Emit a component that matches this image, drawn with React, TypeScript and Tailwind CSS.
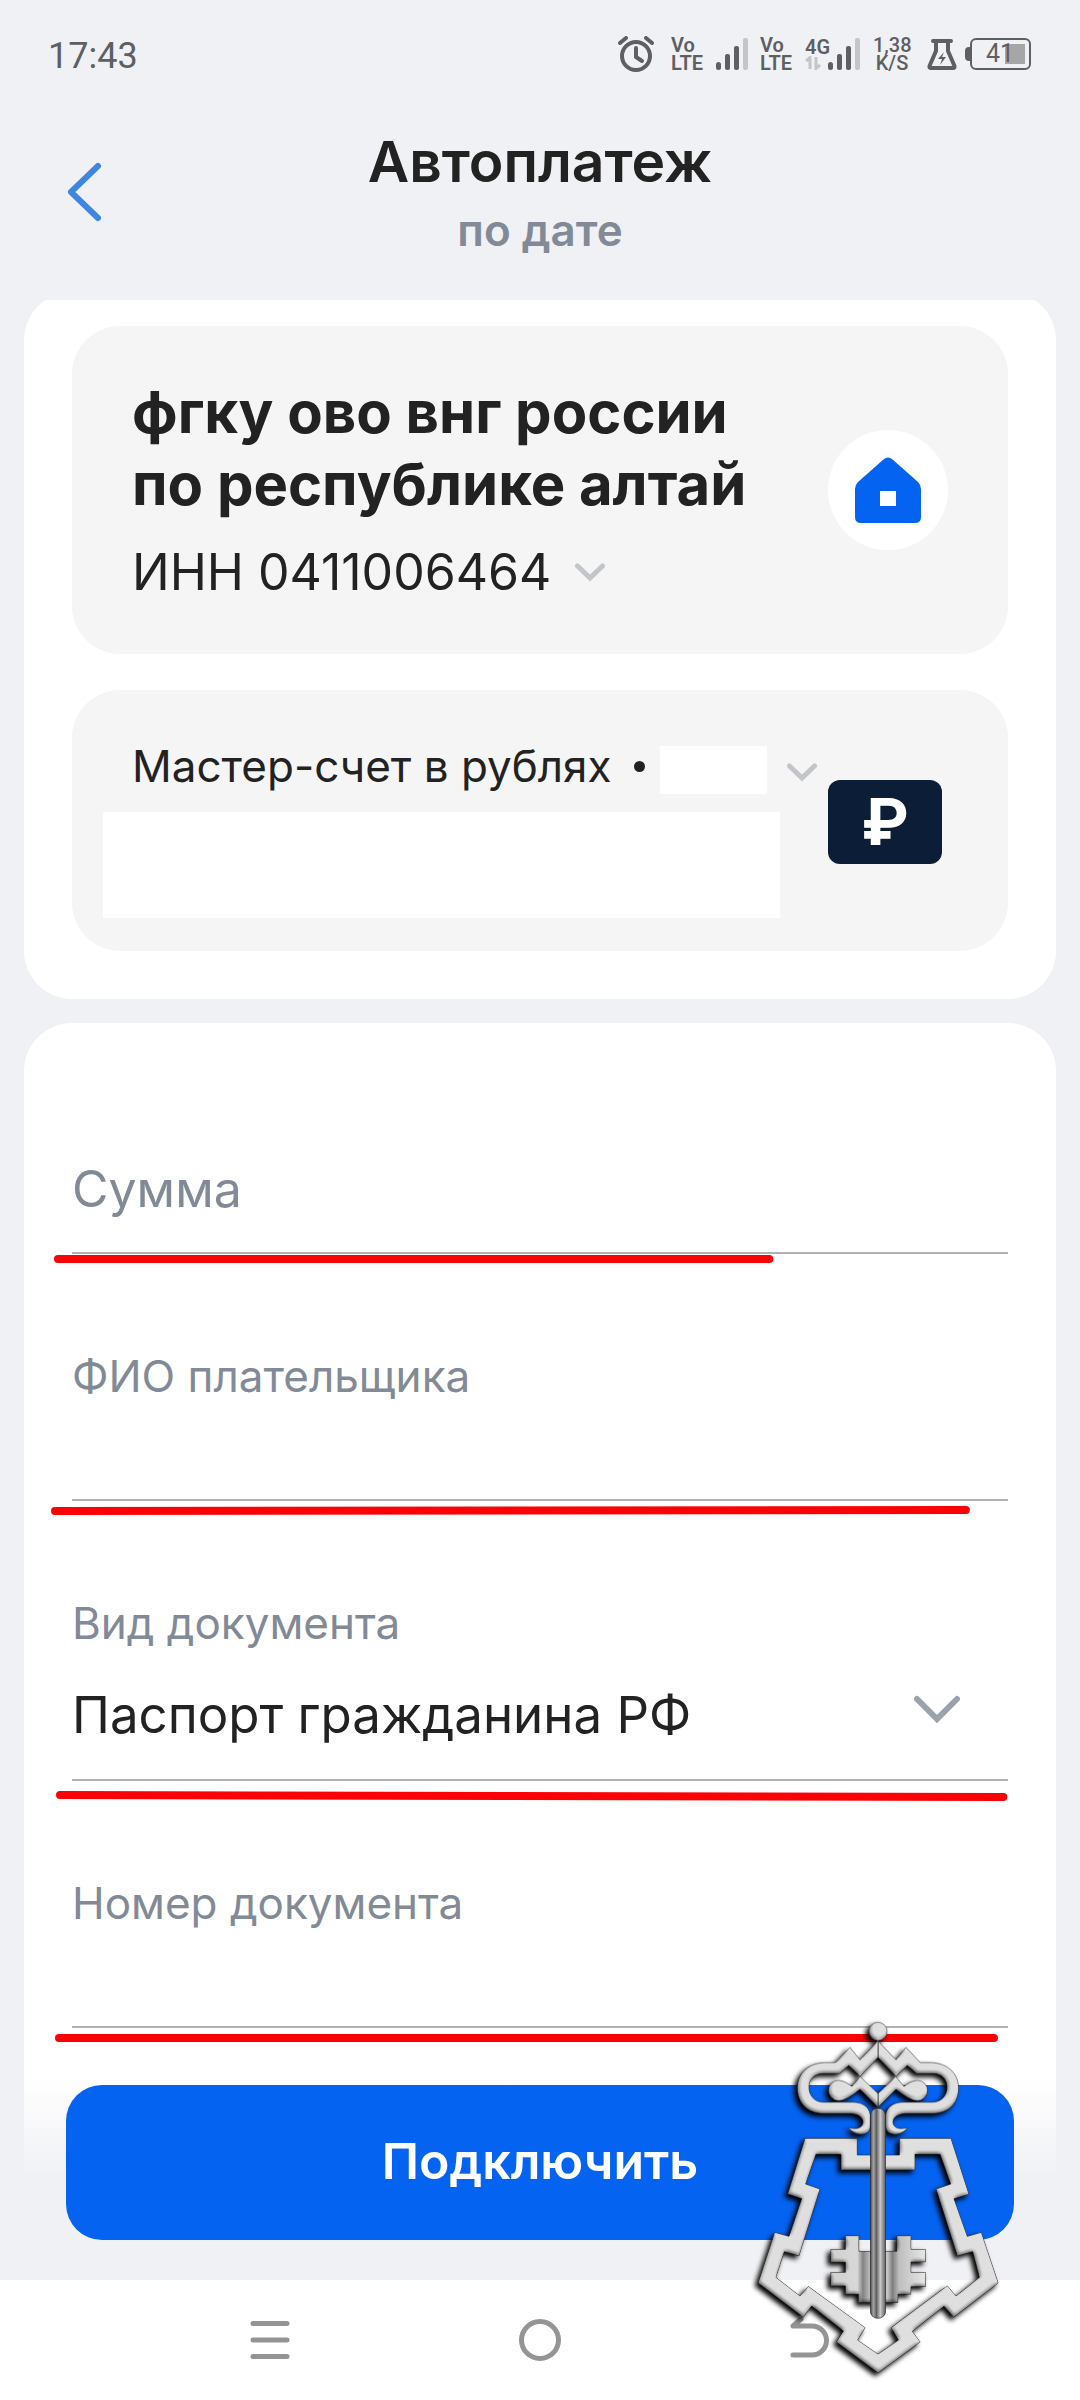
import { useState } from "react";
import type { ReactNode } from "react";

const DOC_TYPES = ["Паспорт гражданина РФ", "Военный билет", "Загранпаспорт"];

function Chevron({ className }: { className: string }) {
  return (
    <svg viewBox="0 0 30 19" fill="none" stroke="currentColor" strokeWidth="5" strokeLinecap="round" strokeLinejoin="miter" className={className}>
      <path d="M2.500 3 15 15 27.500 3" />
    </svg>
  );
}

function Signal() {
  return (
    <svg viewBox="0 0 32 32" className="w-8 h-8">
      <rect x="0" y="24" width="5" height="8" rx="2.5" fill="#5e5f63" />
      <rect x="9" y="16" width="5" height="16" rx="2" fill="#5e5f63" />
      <rect x="18" y="8" width="5" height="24" rx="2" fill="#5e5f63" />
      <rect x="27" y="0" width="5" height="32" rx="2" fill="#c4c5c8" />
    </svg>
  );
}

function VoLte() {
  return (
    <div className="w-[31px] text-[20px] leading-[18px] font-semibold">
      Vo
      <br />
      LTE
    </div>
  );
}

function StatusBar() {
  return (
    <div className="h-28 pl-12 pr-[49px] pb-1 flex items-center justify-between text-[#5e5f63] font-[Roboto,sans-serif]">
      <span className="pt-1 text-[36px] leading-10">17:43</span>
      <div className="flex items-center">
        <svg viewBox="0 0 38 36" fill="none" stroke="currentColor" strokeLinecap="round" className="w-[38px] h-9 mr-4">
          <circle cx="19" cy="20" r="14" strokeWidth="4" />
          <path d="M19 12v9l6 4" strokeWidth="4" strokeLinejoin="round" />
          <path d="M3 7 9 2M35 7 29 2" strokeWidth="4" />
        </svg>
        <VoLte />
        <div className="ml-[14px] mr-3"><Signal /></div>
        <VoLte />
        <div className="ml-[14px] flex items-end">
          <div className="w-[23px]">
            <div className="text-[20px] leading-[18px] font-semibold">4G</div>
            <svg viewBox="0 0 16 14" fill="none" stroke="#c4c5c8" strokeWidth="3" className="w-4 h-[14px]">
              <path d="M1 5 5 1.500V13M15 9l-4 3.500V1" />
            </svg>
          </div>
          <Signal />
        </div>
        <div className="ml-[13px] w-[38px] text-center text-[20px] leading-[18px] font-medium">
          1,38
          <br />
          K/S
        </div>
        <svg viewBox="0 0 30 31" className="ml-4 w-[30px] h-[31px]">
          <path d="M6 2h18M9 3v9L2.500 27q-.5 2 1.500 2h22q2 0 1.500-2L21 12V3" fill="none" stroke="currentColor" strokeWidth="4" strokeLinecap="round" strokeLinejoin="round" />
          <path d="m17 13-6 7h4l-2 6 6-8h-4z" fill="currentColor" />
        </svg>
        <div className="ml-2 w-[5px] h-[14px] rounded-l-sm bg-[#5e5f63]" />
        <div className="relative w-[61px] h-8 rounded-md border-2 border-[#5e5f63] text-[25px] leading-7">
          <div className="absolute right-1 top-1 w-5 h-5 bg-[#a5a6a8]" />
          <span className="relative pl-[14px]">41</span>
        </div>
      </div>
    </div>
  );
}

// red pen stroke under a field; slope is the drop in pixels from left to right
function Mark({ width, top, slope = 0, left }: { width: string; top: number; slope?: number; left: number }) {
  return (
    <svg className="absolute inset-x-0 top-full h-6 w-full overflow-visible pointer-events-none">
      <line x1={left} y1={top} x2={width} y2={top + slope} stroke="#fb0207" strokeWidth="8" strokeLinecap="round" />
    </svg>
  );
}

function Field({ id, label, children, mark }: { id: string; label: string; children: ReactNode; mark: ReactNode }) {
  return (
    <div className="relative border-b-2 border-[#b0b3b6] pt-[94px]">
      <label htmlFor={id} className="block text-[44px] leading-[56px] text-[#818a96]">{label}</label>
      {children}
      {mark}
    </div>
  );
}

const crownTop =
  "M414 122 468 179 498 141 541 187H575C630 190 656 225 656 264 656 305 630 341 575 341H495C468 343 455 358 460 372 465 386 485 388 503 382 492 402 465 408 450 400 438 394 437 385 437 370V345C440 320 460 306 490 306H578C605 306 621 285 621 262 621 238 605 222 580 221H530L502 197 468 229 414 173Z";
const crownEye =
  "M414 280 467 229 492 258Q515 240 532 240A31 31 0 0 1 532 302Q508 302 468 268L414 322Z";

function Emblem() {
  return (
    <svg viewBox="51 60 726 1062" className="absolute right-[81px] bottom-[26px] w-[242px] h-[354px] pointer-events-none overflow-visible">
      <defs>
        <linearGradient id="shaft" x1="0" x2="1">
          <stop offset="0" stopColor="#444" />
          <stop offset=".2" stopColor="#a5a5a5" />
          <stop offset=".4" stopColor="#606060" />
          <stop offset=".65" stopColor="#cacaca" />
          <stop offset="1" stopColor="#5a5a5a" />
        </linearGradient>
        <linearGradient id="bit" x1="0" x2="1">
          <stop offset="0" stopColor="#c6c6c6" />
          <stop offset=".28" stopColor="#cecece" />
          <stop offset=".34" stopColor="#7c7c7c" />
          <stop offset=".4" stopColor="#aaa" />
          <stop offset=".6" stopColor="#bbb" />
          <stop offset=".65" stopColor="#777" />
          <stop offset=".72" stopColor="#b5b5b5" />
          <stop offset="1" stopColor="#dcdcdc" />
        </linearGradient>
        <filter id="metal" x="-10%" y="-10%" width="120%" height="120%" colorInterpolationFilters="sRGB">
          <feGaussianBlur in="SourceAlpha" stdDeviation="6" result="soft" />
          <feDiffuseLighting in="soft" surfaceScale="7" diffuseConstant="1.12" lightingColor="#fff" result="light">
            <feDistantLight azimuth="300" elevation="65" />
          </feDiffuseLighting>
          <feComposite in="SourceGraphic" in2="light" operator="arithmetic" k1="1.05" result="lit" />
          <feComposite in="lit" in2="SourceAlpha" operator="in" result="body" />
          <feGaussianBlur in="SourceAlpha" stdDeviation="8" result="b" />
          <feOffset in="b" dx="-8" dy="8" result="shadow" />
          <feMerge>
            <feMergeNode in="shadow" />
            <feMergeNode in="body" />
          </feMerge>
        </filter>
      </defs>
      <g stroke="#222" strokeWidth="2" fill="#d4d4d4">
        <path
          filter="url(#metal)"
          fillRule="evenodd"
          d="M195 415H352V465H478V415H633L687 583 642 596 682 709 724 697 775 849 641 952 612 919 517 994 541 1026 414 1119 289 1026 310 993 215 918 190 952 54 849 104 697 147 709 185 596 143 582ZM228 463 197 552 240 567 177 768 133 755 108 832 180 888 205 859 376 983 353 1020 414 1062 475 1020 453 983 622 857 648 888 718 832 698 755 652 768 588 567 632 552 600 463H525V510H303V463Z"
        />
        <g filter="url(#metal)">
          <path
            fill="url(#bit)"
            d="M316 707H357V754H470V707H513V748H557V786H513V817H557V860H513V883H474V908H355V883H316V858H272V817H316V787H272V748H316Z"
          />
        </g>
        <g filter="url(#metal)">
          <path d={crownTop} />
          <path d={crownTop} transform="matrix(-1 0 0 1 828 0)" />
          <path d={crownEye} />
          <path d={crownEye} transform="matrix(-1 0 0 1 828 0)" />
          <circle cx="414" cy="94" r="28" />
        </g>
        <rect x="391" y="325" width="46" height="630" rx="22" fill="url(#shaft)" />
      </g>
    </svg>
  );
}

export default function App() {
  const [docType, setDocType] = useState(DOC_TYPES[0]);

  return (
    <div className="min-h-screen flex flex-col bg-[#f0f1f5] text-[#222222] font-[Inter,sans-serif]">
      <StatusBar />

      {/* Header */}
      <header className="relative h-[188px] pt-[18px] flex flex-col items-center gap-2">
        <button aria-label="Назад" className="absolute left-10 top-9 text-[#3f86e2]">
          <svg viewBox="0 0 88 88" fill="none" stroke="currentColor" strokeWidth="6" strokeLinecap="round" strokeLinejoin="round" className="w-[88px] h-[88px]">
            <path d="M58 18 31 44 58 70" />
          </svg>
        </button>
        <h1 className="text-[57px] leading-[64px] font-semibold">Автоплатеж</h1>
        <p className="text-[44px] leading-[56px] font-semibold text-[#818a96]">по дате</p>
      </header>

      {/* Recipient and account */}
      <div className="px-6 overflow-hidden">
        <section className="-mt-2 px-12 pt-[34px] pb-12 rounded-[48px] bg-white flex flex-col gap-9">
          <div className="py-[50px] px-[60px] rounded-[48px] bg-[#f5f5f5] flex items-center justify-between">
            <div>
              <h2 className="text-[58px] leading-[72px] font-bold">
                фгку ово внг россии
                <br />
                по республике алтай
              </h2>
              <button className="mt-5 flex items-center gap-6 text-[50px] leading-[64px]">
                ИНН 0411006464
                <Chevron className="w-[30px] h-[19px] text-[#c2c5ca]" />
              </button>
            </div>
            <div className="w-[120px] h-[120px] shrink-0 rounded-full bg-white flex items-center justify-center">
              <svg viewBox="0 0 66 66" className="w-[66px] h-[66px]">
                <path fillRule="evenodd" fill="#0563f2" d="M29 2q4-3 8 0l26 23q3 3 3 7v28q0 6-6 6H6q-6 0-6-6V32q0-4 3-7ZM25 34v15h16V34Z" />
              </svg>
            </div>
          </div>

          <div className="pt-12 pb-[33px] pl-[31px] pr-[60px] rounded-[48px] bg-[#f5f5f5] flex items-center justify-between">
            <div className="grow">
              <button className="pl-[29px] flex items-center text-[44px] leading-[56px]">
                Мастер-счет в рублях
                <span className="ml-[22px] w-[11px] h-[11px] rounded-full bg-[#222222]" />
                <span className="ml-[15px] mt-2 w-[107px] h-12 bg-white" />
                <Chevron className="ml-5 mt-3 w-[30px] h-[19px] text-[#c2c5ca]" />
              </button>
              <div className="mt-[18px] mr-12 h-[106px] bg-white" />
            </div>
            <div className="w-[120px] shrink-0 pb-3">
              <div className="w-[114px] h-[84px] rounded-xl bg-[#0b1d37] text-white text-[64px] leading-[84px] font-bold text-center">₽</div>
            </div>
          </div>
        </section>
      </div>

      {/* Payment form */}
      <section className="grow mx-6 mt-6 px-12 pb-12 rounded-t-[48px] bg-white">
        <div className="relative border-b-2 border-[#b0b3b6] pt-[134px] pb-[31px]">
          <input aria-label="Сумма" placeholder="Сумма" className="block w-full h-16 text-[50px] leading-[64px] outline-none placeholder:text-[#818a96]" />
          <Mark left={-14} width="74.500%" top={7} />
        </div>

        <Field id="payer" label="ФИО плательщика" mark={<Mark left={-17} width="95.500%" top={12} slope={-1} />}>
          <input id="payer" className="block w-full mt-8 h-[63px] text-[51px] leading-[63px] outline-none" />
        </Field>

        <Field id="docType" label="Вид документа" mark={<Mark left={-12} width="99.500%" top={16} slope={2} />}>
          <div className="relative mt-8 pb-8">
            <select
              id="docType"
              value={docType}
              onChange={(e) => setDocType(e.target.value)}
              className="block w-full h-16 appearance-none bg-transparent text-[51px] leading-[64px] outline-none"
            >
              {DOC_TYPES.map((type) => (
                <option key={type}>{type}</option>
              ))}
            </select>
            <svg viewBox="0 0 46 28" fill="none" stroke="#9aa2ac" strokeWidth="6" strokeLinecap="round" className="absolute right-12 top-3 w-[46px] h-7 pointer-events-none">
              <path d="M3 4 23 24 43 4" />
            </svg>
          </div>
        </Field>

        <Field id="docNumber" label="Номер документа" mark={<Mark left={-13} width="98.500%" top={12} />}>
          <input id="docNumber" className="block w-full mt-8 h-[63px] text-[51px] leading-[63px] outline-none" />
        </Field>
      </section>

      <div className="relative">
        <div className="mx-6 px-[42px] pt-[9px] pb-10 bg-linear-to-b from-white to-[#f0f1f5] to-50%">
          <button className="block w-full h-[155px] pb-1 rounded-[36px] bg-[#0563f2] text-white text-[50px] leading-[64px] font-semibold">
            Подключить
          </button>
        </div>

        {/* System navigation */}
        <nav className="h-[120px] px-[12.5%] grid grid-cols-3 place-items-center bg-white text-[#949494]">
          <button aria-label="Недавние">
            <svg viewBox="0 0 42 42" stroke="currentColor" strokeWidth="5" strokeLinecap="round" className="w-[42px] h-[42px]">
              <path d="M4 4.500h34M4 21h34M4 37.500h34" />
            </svg>
          </button>
          <button aria-label="Домой" className="w-[42px] h-[42px] rounded-full border-5 border-current" />
          <button aria-label="Назад">
            <svg viewBox="0 0 42 46" fill="none" stroke="currentColor" strokeWidth="5" strokeLinecap="round" strokeLinejoin="round" className="w-[42px] h-[46px]">
              <path d="M12 2 4 9h19a14.500 14.500 0 0 1 0 29H4" />
            </svg>
          </button>
        </nav>
        <Emblem />
      </div>
    </div>
  );
}
